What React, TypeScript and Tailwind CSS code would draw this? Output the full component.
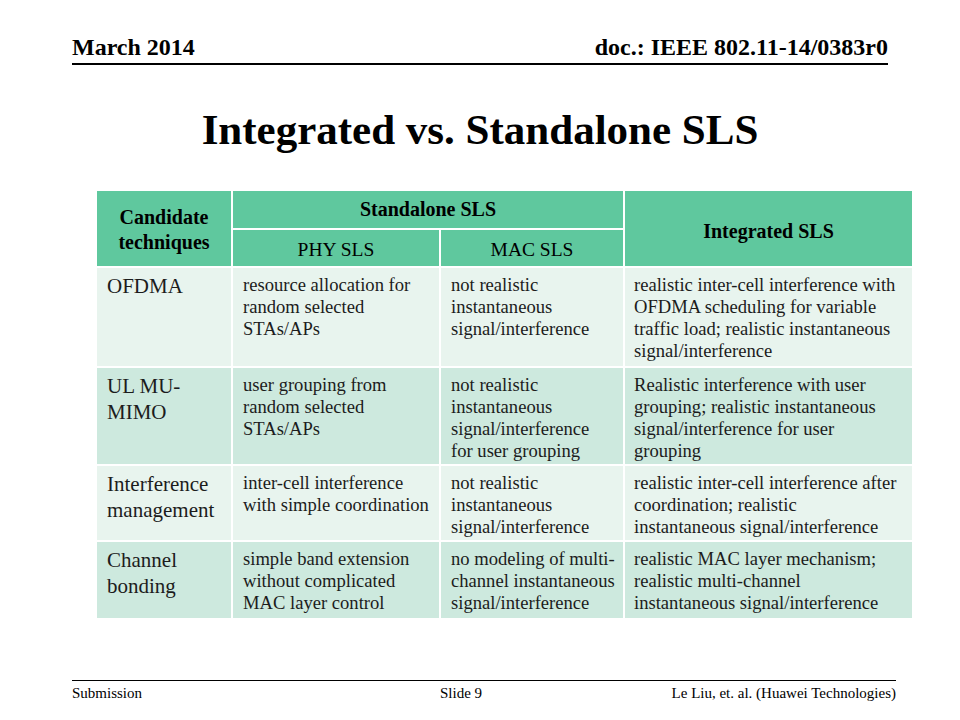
import React from "react";

const serif = "font-['Liberation_Serif','Times_New_Roman',serif]";

type Row = {
  name: string[];
  phy: string[];
  mac: string[];
  integrated: string[];
  dark: boolean;
};

const rows: Row[] = [
  {
    name: ["OFDMA"],
    phy: ["resource allocation for", "random selected", "STAs/APs"],
    mac: ["not realistic", "instantaneous", "signal/interference"],
    integrated: [
      "realistic inter-cell interference with",
      "OFDMA scheduling for variable",
      "traffic load; realistic instantaneous",
      "signal/interference",
    ],
    dark: false,
  },
  {
    name: ["UL MU-", "MIMO"],
    phy: ["user grouping from", "random selected", "STAs/APs"],
    mac: ["not realistic", "instantaneous", "signal/interference", "for user grouping"],
    integrated: [
      "Realistic interference with user",
      "grouping; realistic instantaneous",
      "signal/interference for user",
      "grouping",
    ],
    dark: true,
  },
  {
    name: ["Interference", "management"],
    phy: ["inter-cell interference", "with simple coordination"],
    mac: ["not realistic", "instantaneous", "signal/interference"],
    integrated: [
      "realistic inter-cell interference after",
      "coordination; realistic",
      "instantaneous signal/interference",
    ],
    dark: false,
  },
  {
    name: ["Channel", "bonding"],
    phy: ["simple band extension", "without complicated", "MAC layer control"],
    mac: ["no modeling of multi-", "channel instantaneous", "signal/interference"],
    integrated: [
      "realistic MAC layer mechanism;",
      "realistic multi-channel",
      "instantaneous signal/interference",
    ],
    dark: true,
  },
];

function Lines({ lines }: { lines: string[] }) {
  return (
    <>
      {lines.map((l) => (
        <div key={l} className="whitespace-nowrap">
          {l}
        </div>
      ))}
    </>
  );
}

export default function App() {
  return (
    <div className={`w-[960px] h-[720px] bg-white text-black flex flex-col ${serif}`}>
      {/* Header */}
      <div className="mx-[72px] w-[816px] pt-[34px] flex justify-between items-end border-b-[2px] border-black pb-[3px]">
        <span className="text-[24px] font-bold leading-[26px]">March 2014</span>
        <span className="text-[24px] font-bold leading-[26px]">doc.: IEEE 802.11-14/0383r0</span>
      </div>

      {/* Title */}
      <h1 className="mt-[40px] text-center text-[43px] font-bold leading-[50px]">
        Integrated vs. Standalone SLS
      </h1>

      {/* Table */}
      <div className="mt-[36px] ml-[97px] w-[815px] grid grid-cols-[134px_206px_182px_287px] grid-rows-[37px_36px_98px_96px_74px_76px] gap-[2px] bg-white">
        <div className="row-span-2 bg-[#5fc89e] flex flex-col items-center justify-center pt-[2px] text-[20px] font-bold leading-[25px]">
          <div>Candidate</div>
          <div>techniques</div>
        </div>
        <div className="col-span-2 bg-[#5fc89e] flex items-center justify-center text-[20px] font-bold pb-[2px]">
          Standalone SLS
        </div>
        <div className="row-span-2 bg-[#5fc89e] flex items-center justify-center text-[20px] font-bold pt-[4px]">
          Integrated SLS
        </div>
        <div className="bg-[#5fc89e] flex items-center justify-center text-[19.5px] pt-[4px]">PHY SLS</div>
        <div className="bg-[#5fc89e] flex items-center justify-center text-[19.5px] pt-[4px]">MAC SLS</div>

        {rows.map((r) => {
          const bg = r.dark ? "bg-[#cde9de]" : "bg-[#e8f4ee]";
          return (
            <React.Fragment key={r.name.join(" ")}>
              <div className={`${bg} pl-[10px] pt-[5px] text-[21px] leading-[26px] text-[#1c1c1c]`}>
                <Lines lines={r.name} />
              </div>
              <div className={`${bg} pl-[10px] pt-[6px] text-[18.6px] leading-[22px] text-[#1c1c1c]`}>
                <Lines lines={r.phy} />
              </div>
              <div className={`${bg} pl-[10px] pt-[6px] text-[18.6px] leading-[22px] text-[#1c1c1c]`}>
                <Lines lines={r.mac} />
              </div>
              <div className={`${bg} pl-[9px] pt-[6px] text-[18.6px] leading-[22px] text-[#1c1c1c]`}>
                <Lines lines={r.integrated} />
              </div>
            </React.Fragment>
          );
        })}
      </div>

      {/* Footer */}
      <div className="mt-auto mb-[18px] mx-[72px] w-[824px] border-t border-black pt-[3px] flex items-start text-[15px] leading-[18px]">
        <span className="w-[368px]">Submission</span>
        <span>Slide 9</span>
        <span className="ml-auto">Le Liu, et. al. (Huawei Technologies)</span>
      </div>
    </div>
  );
}
